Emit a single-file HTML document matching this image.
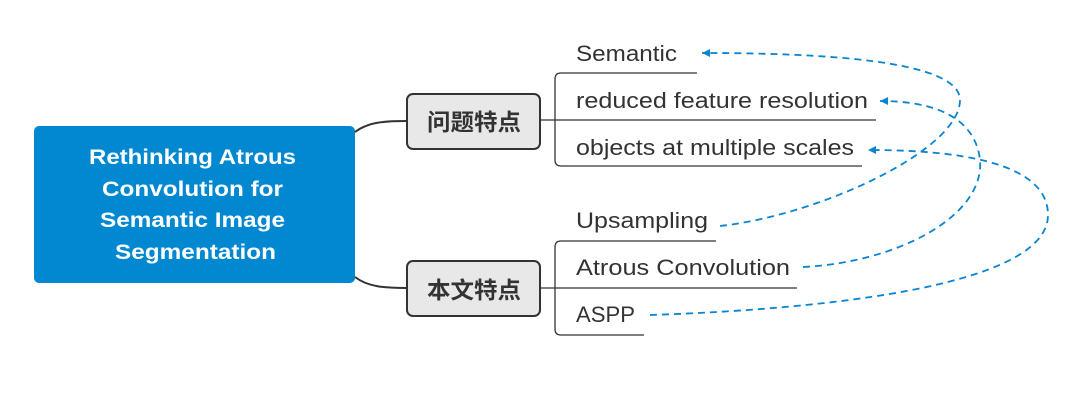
<!DOCTYPE html>
<html><head><meta charset="utf-8"><style>
html,body{margin:0;padding:0;background:#fff;width:1074px;height:415px;overflow:hidden}
svg text{font-family:"Liberation Sans","Noto Sans CJK SC",sans-serif}
</style></head><body>
<svg width="1074" height="415" viewBox="0 0 1074 415" xmlns="http://www.w3.org/2000/svg">
<defs>
<marker id="ar" markerWidth="9" markerHeight="9" refX="8" refY="4" orient="auto" markerUnits="userSpaceOnUse">
<path d="M0,0 L8,4 L0,8 z" fill="#0a84d0"/></marker>
</defs>
<rect x="34" y="126" width="321" height="157" rx="5" fill="#0288d1"/>
<g fill="#fff" font-weight="bold" font-size="21">
<text x="89" y="164" textLength="207" lengthAdjust="spacingAndGlyphs">Rethinking Atrous</text>
<text x="102" y="196" textLength="181" lengthAdjust="spacingAndGlyphs">Convolution for</text>
<text x="100" y="227" textLength="185" lengthAdjust="spacingAndGlyphs">Semantic Image</text>
<text x="115" y="259" textLength="161" lengthAdjust="spacingAndGlyphs">Segmentation</text>
</g>
<g fill="none" stroke="#333" stroke-width="2">
<path d="M355,132 C368,122 385,121 406,121"/>
<path d="M355,277 C368,287 385,288 406,288"/>
</g>
<g fill="#e8e8e8" stroke="#333" stroke-width="2">
<rect x="407" y="94" width="133" height="55" rx="6"/>
<rect x="407" y="261" width="133" height="55" rx="6"/>
</g>
<g fill="#333" font-weight="bold" font-size="23">
<text x="427" y="130" textLength="94" lengthAdjust="spacingAndGlyphs">问题特点</text>
<text x="427" y="298" textLength="94" lengthAdjust="spacingAndGlyphs">本文特点</text>
</g>
<g fill="none" stroke="#333" stroke-width="1.3">
<path d="M697,73 H561 Q555,73 555,79 V160 Q555,166 561,166 H862"/>
<path d="M540,120 H876"/>
<path d="M716,241 H561 Q555,241 555,247 V329 Q555,335 561,335 H644"/>
<path d="M540,288 H797"/>
</g>
<g fill="#333" font-size="22">
<text x="576" y="61" textLength="101" lengthAdjust="spacingAndGlyphs">Semantic</text>
<text x="576" y="108" textLength="292" lengthAdjust="spacingAndGlyphs">reduced feature resolution</text>
<text x="576" y="155" textLength="278" lengthAdjust="spacingAndGlyphs">objects at multiple scales</text>
<text x="576" y="228" textLength="132" lengthAdjust="spacingAndGlyphs">Upsampling</text>
<text x="576" y="275" textLength="214" lengthAdjust="spacingAndGlyphs">Atrous Convolution</text>
<text x="576" y="322" textLength="59" lengthAdjust="spacingAndGlyphs">ASPP</text>
</g>
<g fill="none" stroke="#0a84d0" stroke-width="1.8" stroke-dasharray="7,5">
<path d="M720,226 C820,215 960,150 960,100 C960,60 820,53 702,53" marker-end="url(#ar)"/>
<path d="M803,267 C900,262 985,215 980,160 C975,115 930,101 880,101" marker-end="url(#ar)"/>
<path d="M650,315 C800,310 1048,290 1048,215 C1048,160 950,150 868,150" marker-end="url(#ar)"/>
</g>
</svg>
</body></html>
